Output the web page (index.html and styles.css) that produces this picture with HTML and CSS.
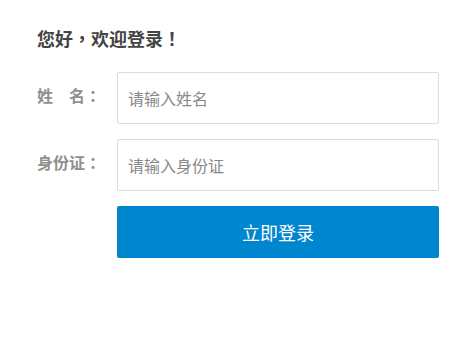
FILE: index.html
```html
<!DOCTYPE html>
<html lang="zh-CN">
<head>
<meta charset="utf-8">
<title>登录</title>
<link rel="stylesheet" href="styles.css">
</head>
<body>
<div class="login">
  <h1 class="login-title">您好<span class="punct" lang="zh-TW">，</span>欢迎登录<span class="punct" lang="zh-TW">！</span></h1>
  <form class="login-form">
    <div class="form-row">
      <label class="form-label" for="name">姓　名<span class="punct" lang="zh-TW">：</span></label>
      <input class="form-input" id="name" type="text" placeholder="请输入姓名">
    </div>
    <div class="form-row">
      <label class="form-label" for="idcard">身份证<span class="punct" lang="zh-TW">：</span></label>
      <input class="form-input" id="idcard" type="text" placeholder="请输入身份证">
    </div>
    <div class="form-row">
      <span class="form-label"></span>
      <button class="form-submit" type="button">立即登录</button>
    </div>
  </form>
</div>
</body>
</html>
```

FILE: styles.css
```css
html, body {
  margin: 0;
  padding: 0;
  background: #fff;
}
body {
  font-family: "Noto Sans CJK SC", "Noto Sans", sans-serif;
}
.punct {
  font-family: "Noto Sans CJK TC", "Noto Sans CJK SC", sans-serif;
}
.login {
  padding: 26px 0 0 37px;
}
.login-title {
  margin: 0;
  font-size: 18px;
  line-height: 24px;
  font-weight: bold;
  color: #444;
}
.login-form {
  margin-top: 22px;
  display: flex;
  flex-direction: column;
  gap: 15px;
}
.form-row {
  display: grid;
  grid-template-columns: 80px 322px;
  align-items: start;
}
.form-label {
  padding-top: 11px;
  font-size: 16px;
  line-height: 24px;
  font-weight: bold;
  color: #8f8f8f;
}
.form-input {
  box-sizing: border-box;
  width: 322px;
  height: 52px;
  margin: 0;
  padding: 0 10px;
  border: 1px solid #dcdcdc;
  border-radius: 2px;
  font-family: inherit;
  font-size: 16px;
  color: #333;
  outline: none;
}
.form-input::placeholder {
  color: #888;
}
.form-submit {
  box-sizing: border-box;
  width: 322px;
  height: 52px;
  margin: 0;
  border: none;
  border-radius: 2px;
  background: #0085cf;
  color: #fff;
  font-family: inherit;
  font-size: 18px;
  cursor: pointer;
}
```
